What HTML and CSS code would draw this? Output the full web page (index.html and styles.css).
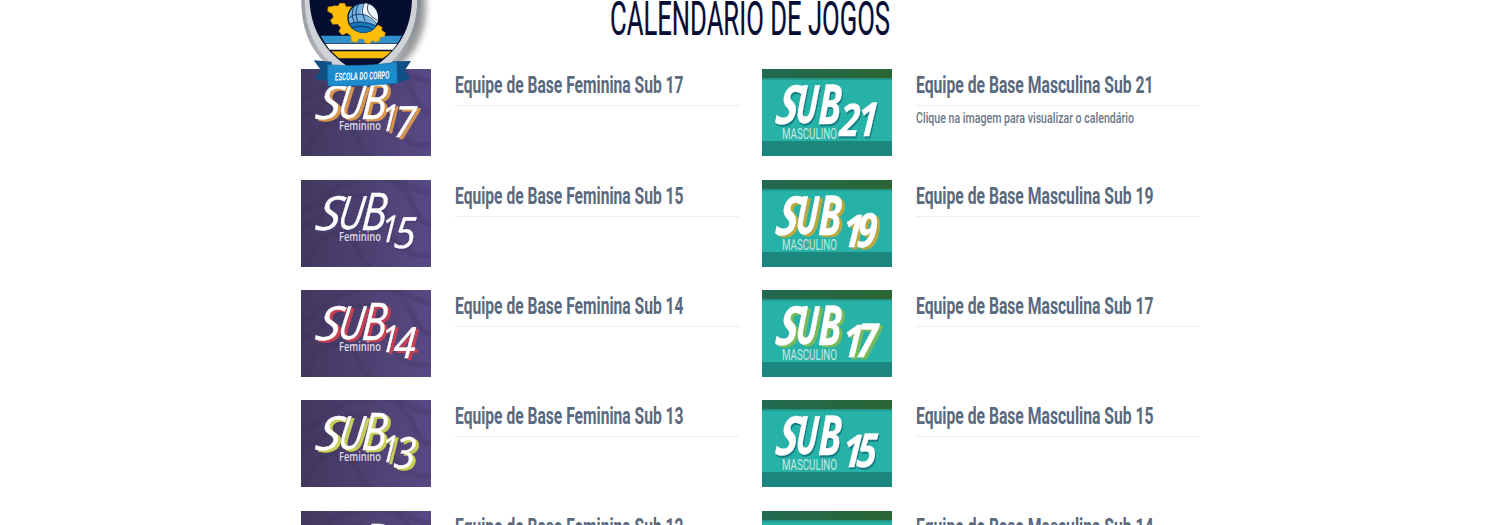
FILE: index.html
```html
<!DOCTYPE html>
<html lang="pt-BR">
<head>
<meta charset="utf-8">
<title>Calendário de Jogos</title>
<link rel="stylesheet" href="styles.css">
</head>
<body>
<svg class="defs" width="0" height="0" aria-hidden="true">
  <defs>
    <linearGradient id="violet"><stop offset="0" stop-color="#42385f"/><stop offset="1" stop-color="#584983"/></linearGradient>
    <linearGradient id="grass"><stop offset="0" stop-color="#216951"/><stop offset="1" stop-color="#2b6634"/></linearGradient>
    <linearGradient id="silver"><stop offset="0" stop-color="#9b9ea5"/><stop offset=".5" stop-color="#d9dbdf"/><stop offset="1" stop-color="#898d94"/></linearGradient>
    <filter id="soft" x="-20%" y="-20%" width="140%" height="140%"><feGaussianBlur stdDeviation="9"/></filter>
    <symbol id="fem" viewBox="0 0 130 87">
      <rect width="130" height="87" fill="url(#violet)"/>
      <g fill="none" stroke="#352c55" stroke-opacity=".2" stroke-width="6">
        <path d="M-4 31C18 31 23 8 49 2S91-6 104 11s10 35 30 33"/>
        <path d="M-4 48C24 45 24 22 48 17s36 12 40 29 21 36 46 28"/>
        <path d="M5 92C7 61 28 50 43 55s12 24 29 36M78-5c25 2 30 17 56 18"/>
      </g>
    </symbol>
    <symbol id="masc" viewBox="0 0 130 87">
      <rect width="130" height="87" fill="#27b2a8"/>
      <rect width="130" height="9.5" fill="url(#grass)"/>
      <rect y="9.5" width="130" height="1.5" fill="#219b91"/>
      <rect y="72" width="130" height="15" fill="#1b877f"/>
    </symbol>
  </defs>
</svg>

<svg class="crest" viewBox="0 0 435 270" role="img">
  <path class="crest-shadow" d="M30-20H390C402 80 370 155 310 200L130 200Z" filter="url(#soft)"/>
  <path d="M19-20C15 88 48 160 116 211H274C347 158 382 84 376-20Z" fill="url(#silver)"/>
  <path d="M29-20C27 82 58 153 128 208H263C335 151 371 78 366-20Z" fill="#d0d2d6"/>
  <path d="M43-20C42 72 75 142 157 199H240C321 142 353 75 351-20Z" fill="#050d30"/>
  <path d="M77 107H321L308 129H90Z" fill="#2e91cc"/>
  <path d="M91 131H307L293 149H104Z" fill="#fff"/>
  <path d="M109 154H289Q277 166 264 175H132Z" fill="#f6bd0d"/>
  <path d="M116 17l13 1 5-8 15 0 4 10 17 0 9 12-7 28 24 31 33 3 17-20 15 7-1 10 11 7-3 12-13 2-2 11-13 3-8-5-9 10-14-3-2-10-15-2-7 11-16-3-1-17-12-8-14 6-10-10 5-12-9-11-15 1-7-12 9-9-3-11-14-7 1-13 14-2Z" fill="#fdbd0c" stroke="#d58d00" stroke-width="1.5"/>
  <ellipse cx="205" cy="53" rx="46" ry="44" fill="#72b4df" stroke="#071538" stroke-width="4"/>
  <path d="M208 10C246 12 256 52 245 72C232 59 216 44 199 42C199 29 201 19 208 10Z" fill="#eef6fb"/>
  <path d="M163 73C185 61 218 65 243 78C234 97 197 108 175 86Z" fill="#1476b6"/>
  <path d="M192 12C181 26 181 43 188 65M178 17C169 37 171 52 178 67M208 10C199 28 201 43 211 63M220 12C213 29 220 46 247 61M160 56C181 35 222 37 246 73M163 73C185 61 218 65 243 78M169 84C192 74 218 80 232 88" fill="none" stroke="#09224b" stroke-width="2.5"/>
  <path d="M56 181L110 185V242L98 243 57 236 77 209ZM348 183L293 184V246L306 249 347 236 330 210Z" fill="#124f85"/>
  <path d="M98 243L118 257 113 240ZM306 249L290 255V244Z" fill="#08294d"/>
  <path d="M98 194Q199 202 305 187L307 250Q205 260 99 257Z" fill="#1c8ccc" stroke="#1671aa" stroke-width="2"/>
  <text class="crest-text" x="120" y="239" textLength="163" lengthAdjust="spacingAndGlyphs" transform="rotate(-2 200 230)">ESCOLA DO CORPO</text>
</svg>

<main class="page">
  <h1 class="title"><svg class="title-svg"><text x="0" y="34.8" textLength="280" lengthAdjust="spacingAndGlyphs">CALENDARIO DE JOGOS</text></svg></h1>
  <div class="teams" id="teams"></div>
</main>
<script src="teams.js"></script>
</body>
</html>
```

FILE: styles.css
```css
html, body { height: 100%; }
body { margin: 0; overflow: hidden; background: #fff; font-family: Roboto, "Liberation Sans", sans-serif; }
.defs { position: absolute; }
.page { width: 899px; height: 525px; margin-left: 301px; overflow: hidden; }
.title { height: 69.2px; margin: 0; text-align: center; line-height: 0; }
.title-svg { width: 281px; height: 45px; overflow: visible; fill: #050d35; stroke: #050d35; stroke-width: .2px; font-size: 47.5px; font-weight: 400; }
.teams { display: grid; grid-template-columns: 438px 438px; column-gap: 23px; row-gap: 23.4px; }
.team { display: grid; grid-template-columns: 130px 284px; column-gap: 24px; height: 87px; }
.thumb { display: block; width: 130px; height: 87px; overflow: hidden; }
.name { height: 36px; margin: 0; border-bottom: 1px solid #eee; line-height: 0; }
.name svg { width: 284px; height: 34px; overflow: visible; fill: #59697e; font-size: 23.5px; font-weight: 700; }
.note { margin: 0; line-height: 0; }
.note svg { width: 284px; height: 24px; overflow: visible; fill: #6c7888; font-size: 15px; font-weight: 500; }
.brush { fill: #fff; stroke: #fff; stroke-width: .4px; font-family: "Open Sans", sans-serif; font-style: italic; font-weight: 500; filter: drop-shadow(var(--dx) 2px 0 var(--shade)); }
.masc .brush { stroke-width: .3px; font-weight: 700; }
.label { fill: #dedbea; font-family: "Open Sans", sans-serif; font-size: 12px; font-weight: 600; }
.masc .label { fill: #c4e9e0; font-family: Roboto, sans-serif; font-size: 14.5px; font-weight: 400; }
.crest { position: absolute; z-index: 2; left: 295px; top: 0; width: 145px; height: 90px; }
.crest-shadow { fill: #333; opacity: .5; }
.crest-text { fill: #fff; font-size: 32px; font-style: italic; font-weight: 600; }
```

FILE: teams.js
```js
const teams = [
  ['fem', 17, '#d9954b'], ['masc', 21, '#137c83'],
  ['fem', 15, '#493d75'], ['masc', 19, '#b7a842'],
  ['fem', 14, '#c83f51'], ['masc', 17, '#77b95b'],
  ['fem', 13, '#c9cf50'], ['masc', 15, '#137c83'],
  ['fem', 12, '#493d75'], ['masc', 14, '#137c83']
];

function fitted(text, x, y, width, attrs) {
  return `<text x="${x}" y="${y}" textLength="${width}" lengthAdjust="spacingAndGlyphs" ${attrs}>${text}</text>`;
}

// Each letter sits on its own baseline and leans forward, like brush lettering.
function glyph(char, x, y, width, size, lean = -8) {
  return `<g transform="translate(${x} ${y}) skewX(${lean})">${fitted(char, 0, 0, width, `font-size="${size}"`)}</g>`;
}

function lettering(kind, age) {
  const [first, second] = String(age);
  if (kind === 'fem') {
    return glyph('S', 13, 50, 24, 47, -14) +
      glyph('U', 36, 49, 25, 46) +
      glyph('B', 60, 50, 25, 52, -4) +
      glyph(first, 79, 62, 17, 37, -4) +
      glyph(second, 92, 68, 22, 43, -4);
  }
  const wide = first === '2';
  return glyph('S', 12, 55, 22, 54, -12) +
    glyph('U', 33, 54, 22, 53, -4) +
    glyph('B', 56, 55, 23, 55, -2) +
    glyph(first, wide ? 77 : 80, 67, 20, 45, -4) +
    glyph(second, wide ? 95 : 94, 67, 20, 47, -4);
}

function thumb(kind, age, shade) {
  const dx = shade === '#137c83' || shade === '#493d75' ? 1.5 : 3;
  const label = kind === 'fem'
    ? fitted('Feminino', 38, 61, 42, 'class="label"')
    : fitted('MASCULINO', 20, 70, 55, 'class="label"');
  return `<svg class="thumb ${kind}" viewBox="0 0 130 87" preserveAspectRatio="none">
    <use href="#${kind}" width="130" height="87"/>
    <g class="brush" style="--shade:${shade};--dx:${dx}px">${lettering(kind, age)}</g>${label}</svg>`;
}

document.getElementById('teams').innerHTML = teams.map(([kind, age, shade], i) => {
  const name = `Equipe de Base ${kind === 'fem' ? 'Feminina' : 'Masculina'} Sub ${age}`;
  const note = i === 1
    ? `<p class="note"><svg>${fitted('Clique na imagem para visualizar o calendário', 0, 16.6, 218, '')}</svg></p>` : '';
  return `<article class="team">${thumb(kind, age, shade)}<div>
    <h3 class="name"><svg>${fitted(name, 0, 23.8, kind === 'fem' ? 228.5 : 237.5, '')}</svg></h3>${note}</div></article>`;
}).join('');
```
